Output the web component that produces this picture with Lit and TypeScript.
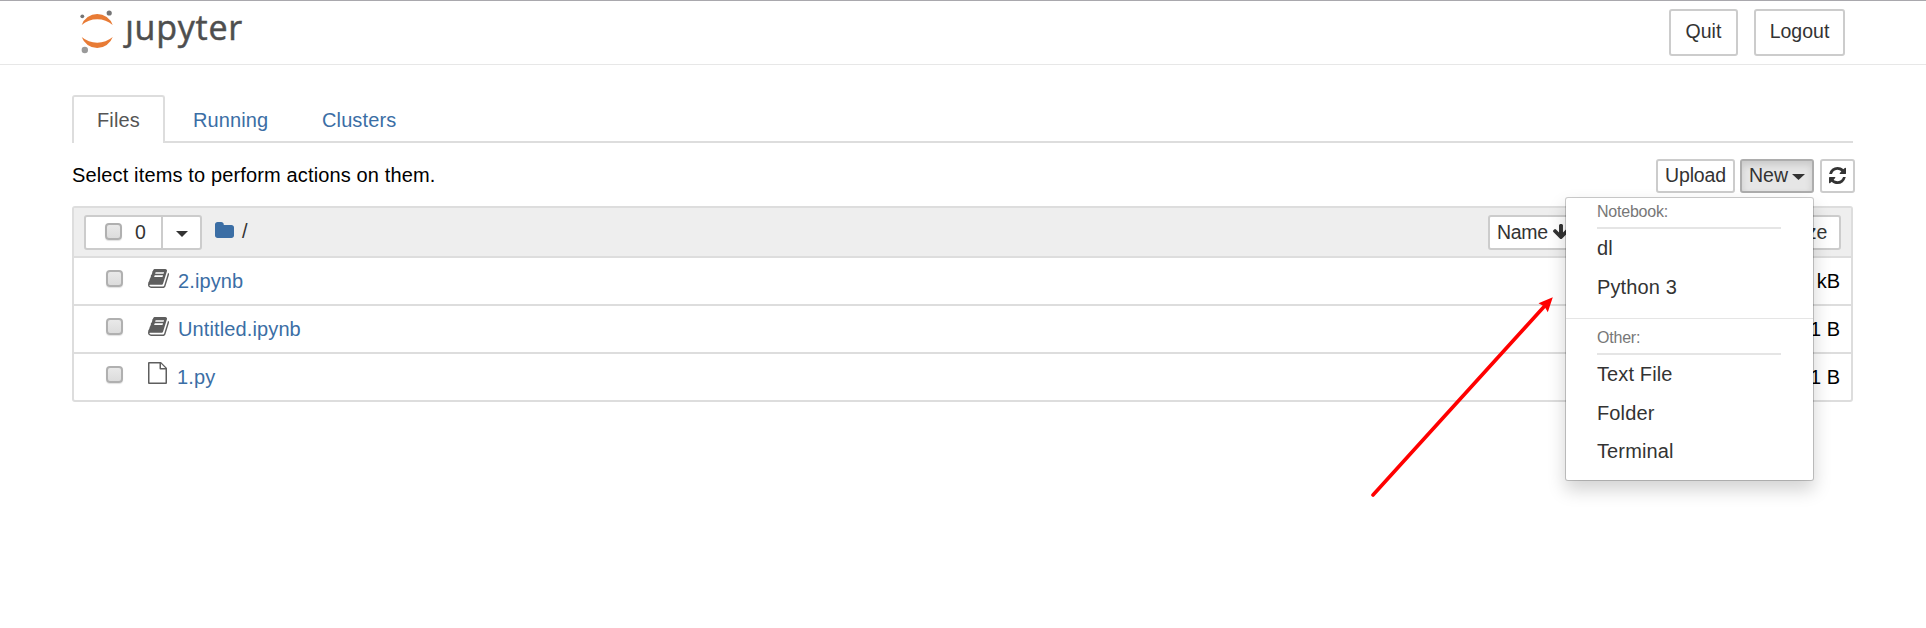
import { LitElement, html, css, svg } from "lit";
import { customElement, property } from "lit/decorators.js";

const glyphs = {
  refresh: {
    box: "0 0 1536 1536",
    d: "M1511 928q0 5-1 7-64 268-268 434.5T764 1536q-146 0-282.5-55T238 1324l-129 129q-19 19-45 19t-45-19-19-45V960q0-26 19-45t45-19h448q26 0 45 19t19 45-19 45l-137 137q71 66 161 102t187 36q134 0 250-65t186-179q11-17 53-117 8-23 30-23h192q13 0 22.5 9.5t9.5 22.5zm25-800v448q0 26-19 45t-45 19h-448q-26 0-45-19t-19-45 19-45l138-138Q969 256 768 256q-134 0-250 65T332 500q-11 17-53 117-8 23-30 23H50q-13 0-22.5-9.5T18 608v-7q65-268 270-434.5T768 0q146 0 284 55.5T1297 212l130-129q19-19 45-19t45 19 19 45z",
  },
  folder: {
    box: "64 128 1664 1408",
    d: "M1728 608v704q0 92-66 158t-158 66h-1216q-92 0-158-66t-66-158v-960q0-92 66-158t158-66h320q92 0 158 66t66 158v32h672q92 0 158 66t66 158z",
  },
  book: {
    box: "64 128 1664 1536",
    d: "M1703 478q40 57 18 129l-275 906q-19 64-76.5 107.5t-122.5 43.5h-923q-77 0-148.5-53.5t-99.5-131.5q-24-67-2-127 0-4 3-27t4-37q1-8-3-21.5t-3-19.5q2-11 8-21t16.5-23.5 16.5-23.5q23-38 45-91.5t30-91.5q3-10 .5-30t-.5-28q3-11 17-28t17-23q21-36 42-92t25-90q1-9-2.5-32t.5-28q4-13 22-30.5t22-22.5q19-26 42.5-84.5t27.5-96.5q1-8-3-25.5t-2-26.5q2-8 9-18t18-23 17-21q8-12 16.5-30.5t15-35 16-36 19.5-32 26.5-23.5 36-11.5 47.5 5.5l-1 3q38-9 51-9h761q74 0 114 56t18 130l-274 906q-36 119-71.5 153.5t-128.5 34.5h-869q-27 0-38 15-11 16-1 43 24 70 144 70h923q29 0 56-15.5t35-41.5l300-987q7-22 5-57 38 15 59 43zm-1064 2q-4 13 2 22.5t20 9.5h608q13 0 25.5-9.5t16.5-22.5l21-64q4-13-2-22.5t-20-9.5h-608q-13 0-25.5 9.5t-16.5 22.5zm-83 256q-4 13 2 22.5t20 9.5h608q13 0 25.5-9.5t16.5-22.5l21-64q4-13-2-22.5t-20-9.5h-608q-13 0-25.5 9.5t-16.5 22.5z",
  },
  file: {
    box: "0 0 19 22",
    d: "M1 0H13L19 6V21Q19 22 18 22H1Q0 22 0 21V1Q0 0 1 0ZM1.5 1.5V20.5H17.5V7.5H12.5Q11.5 7.5 11.5 6.5V1.5ZM13 1.8V6H17.2Z",
  },
  arrow: {
    box: "117 128 1558 1483",
    d: "M1675 832q0 53-37 90l-651 652q-39 37-91 37-53 0-90-37l-651-652q-38-36-38-90 0-53 38-91l74-75q39-37 91-37 53 0 90 37l294 294v-704q0-52 38-90t90-38h128q52 0 90 38t38 90v704l294-294q37-37 90-37 52 0 91 37l75 75q37 39 37 91z",
  },
  caret: { box: "0 0 12 6", d: "M0 0H12L6 6Z" },
};

@customElement("nb-icon")
class NbIcon extends LitElement {
  @property() name: keyof typeof glyphs = "file";
  static styles = css`
    :host { display: block; flex: none; }
    svg { display: block; width: 100%; height: 100%; fill: currentColor; }
    path { fill-rule: evenodd; }
  `;
  render() {
    const g = glyphs[this.name];
    return html`<svg viewBox=${g.box} preserveAspectRatio="none">${svg`<path d=${g.d}></path>`}</svg>`;
  }
}

@customElement("new-menu")
class NewMenu extends LitElement {
  static styles = css`
    :host {
      display: block; box-sizing: border-box; width: 249px; height: 284px;
      background: #fff; background-clip: padding-box;
      border: 1.5px solid rgba(0, 0, 0, 0.2); border-radius: 3px;
      box-shadow: 0 9px 18px rgba(0, 0, 0, 0.175);
      padding-top: 1px; color: #333; letter-spacing: 0.12px;
    }
    .head {
      margin: 0 32px 0 31px; height: 28px; line-height: 25px; box-sizing: content-box;
      font-size: 16px; letter-spacing: -0.22px; color: #777; border-bottom: 2px solid #e5e5e5;
    }
    .item { padding-left: 31px; height: 38.6px; line-height: 38px; }
    .split { height: 1px; background: #e5e5e5; margin: 12px 0 6px; }
  `;
  render() {
    return html`
      <div class="head">Notebook:</div>
      <div class="item">dl</div>
      <div class="item">Python 3</div>
      <div class="split"></div>
      <div class="head">Other:</div>
      <div class="item">Text File</div>
      <div class="item">Folder</div>
      <div class="item">Terminal</div>
    `;
  }
}

@customElement("app-root")
class AppRoot extends LitElement {
  files = [
    { icon: "book", name: "2.ipynb", size: "1 kB" },
    { icon: "book", name: "Untitled.ipynb", size: "231 B" },
    { icon: "file", name: "1.py", size: "1 B" },
  ];

  static styles = css`
    :host {
      display: block; position: relative; height: 628px; overflow: hidden; background: #fff;
      font: 20px/26px "Liberation Sans", Arial, sans-serif; color: #000;
    }
    * { box-sizing: border-box; }
    header {
      height: 65px; border-top: 1px solid #a9a8ad; border-bottom: 1px solid #e7e7e7;
      display: flex; justify-content: space-between; padding: 0 81px 0 80px;
    }
    .logo { display: block; width: 170px; height: 62px; overflow: visible; }
    .wordmark { font-family: "Open Sans", "Noto Sans", sans-serif; font-size: 34px; fill: #4e4e4e; stroke: #4e4e4e; stroke-width: 0.5px; }
    .session { display: flex; gap: 16px; margin-top: 8px; }
    .btn {
      display: flex; align-items: center; justify-content: center; height: 35px; font-size: 19.5px;
      border: 2px solid #ccc; border-radius: 3px; background: #fff; color: #333; padding-bottom: 2px;
    }
    .session .btn { height: 47px; padding-bottom: 3px; }
    .quit { width: 69px; }
    .logout { width: 91px; }
    main { margin: 30px 73px 0 72px; }
    .tabs { display: flex; height: 48px; border-bottom: 2px solid #ddd; color: #3b6ea5; letter-spacing: 0.12px; }
    .tab { height: 48px; padding: 12px 24px 0 26px; line-height: 26px; }
    .tab.on {
      width: 93px; padding: 10px 0 0 23px; color: #555; background: #fff;
      border: 2px solid #ddd; border-bottom: 0; border-radius: 3px 3px 0 0;
    }
    .running { margin-left: 2px; width: 129px; }
    .tools { display: flex; align-items: center; height: 34px; margin: 16px -2px 13px 0; }
    .hint { flex: 1; padding-bottom: 3px; letter-spacing: 0.14px; }
    .tools .btn { height: 34px; }
    .upload { width: 79px; letter-spacing: -0.15px; }
    .drop { position: relative; margin: 0 6px 0 5px; }
    .new { width: 74px; gap: 4px; background: #e6e6e6; border-color: #adadad; box-shadow: inset 0 4px 7px rgba(0, 0, 0, 0.125); }
    .caret { width: 12px; height: 6px; margin-top: 4px; }
    .new .caret { width: 13px; }
    new-menu { position: absolute; right: 0; top: 38px; z-index: 2; }
    .refresh { width: 35px; padding: 0; }
    .refresh nb-icon { width: 17px; height: 17px; margin-top: -2px; }
    .list { border: 2px solid #ddd; border-radius: 3px; height: 196px; }
    .bar { display: flex; align-items: center; height: 48px; background: #eee; padding: 0 10px; }
    .bar .btn { height: 35px; padding-bottom: 1px; }
    .pick { width: 79px; border-radius: 3px 0 0 3px; justify-content: flex-start; padding-left: 19px; gap: 13px; }
    .pickmore { width: 41px; margin-left: -2px; border-radius: 0 3px 3px 0; }
    .check {
      width: 17px; height: 17px; flex: none; border: 2px solid #b0b0b0; border-radius: 4px;
      background: linear-gradient(#e9e9e9, #dcdcdc); box-shadow: 0 1px 1px rgba(0, 0, 0, 0.12);
    }
    .folder { width: 19px; height: 16px; color: #3b6ea5; margin: 0 8px 5px 13px; }
    .slash { flex: 1; color: #333; padding-bottom: 3px; }
    .name { width: 91px; justify-content: flex-start; padding-left: 7px; gap: 5px; letter-spacing: -0.3px; }
    .name nb-icon { width: 16px; height: 15px; }
    .modified { width: 175px; margin: 0 22px 0 5px; }
    .bar .size { width: 60px; padding-right: 5px; }
    .row { display: flex; align-items: center; height: 48px; border-top: 2px solid #ddd; padding: 0 11px 0 32px; }
    .row .check { margin-bottom: 5px; }
    .ico { width: 21px; height: 19px; color: #5e5e5e; margin: 0 9px 5px 25px; }
    .ico.file { width: 19px; height: 22px; margin: 0 10px 8px 25px; }
    .link { flex: 1; color: #3b6ea5; letter-spacing: 0.12px; }
    .link, .bytes { padding-bottom: 1px; }
    .pointer { position: absolute; left: 1360px; top: 280px; z-index: 3; }
  `;

  render() {
    return html`
      <header>
        <svg class="logo" viewBox="80 1 170 62">
          <path d="M81.7 25A16.4 16.4 0 0 1 112.7 25A24 24 0 0 0 81.7 25Z" fill="#e87b35"></path>
          <path d="M81.7 37A16.4 16.4 0 0 0 112.7 37A24 24 0 0 1 81.7 37Z" fill="#e87b35"></path>
          <circle cx="109.2" cy="13" r="2.6" fill="#767677"></circle>
          <circle cx="82.3" cy="16.3" r="1.9" fill="#757575"></circle>
          <circle cx="84.8" cy="50" r="3.2" fill="#9a9a9a"></circle>
          <text class="wordmark" x="125.2" y="40" textLength="117">ȷupyter</text>
        </svg>
        <div class="session">
          <div class="btn quit">Quit</div>
          <div class="btn logout">Logout</div>
        </div>
      </header>
      <main>
        <nav class="tabs">
          <div class="tab on">Files</div>
          <div class="tab running">Running</div>
          <div class="tab">Clusters</div>
        </nav>
        <div class="tools">
          <div class="hint">Select items to perform actions on them.</div>
          <div class="btn upload">Upload</div>
          <div class="drop">
            <div class="btn new">New<nb-icon class="caret" name="caret"></nb-icon></div>
            <new-menu></new-menu>
          </div>
          <div class="btn refresh"><nb-icon name="refresh"></nb-icon></div>
        </div>
        <section class="list">
          <div class="bar">
            <div class="btn pick"><span class="check"></span>0</div>
            <div class="btn pickmore"><nb-icon class="caret" name="caret"></nb-icon></div>
            <nb-icon class="folder" name="folder"></nb-icon>
            <div class="slash">/</div>
            <div class="btn name">Name<nb-icon name="arrow"></nb-icon></div>
            <div class="btn modified"></div>
            <div class="btn size">Size</div>
          </div>
          ${this.files.map((f) => html`
            <div class="row">
              <span class="check"></span>
              <nb-icon class="ico ${f.icon}" name=${f.icon}></nb-icon>
              <span class="link">${f.name}</span>
              <span class="bytes">${f.size}</span>
            </div>`)}
        </section>
      </main>
      <svg class="pointer" width="200" height="225" viewBox="1360 280 200 225">
        <path d="M1373 495L1546 304.5" stroke="#f00" stroke-width="3.6" stroke-linecap="round"></path>
        <path d="M1552.8 297.2L1547.8 312.2L1544.5 306.5L1538.5 303.3Z" fill="#f00"></path>
      </svg>
    `;
  }
}
